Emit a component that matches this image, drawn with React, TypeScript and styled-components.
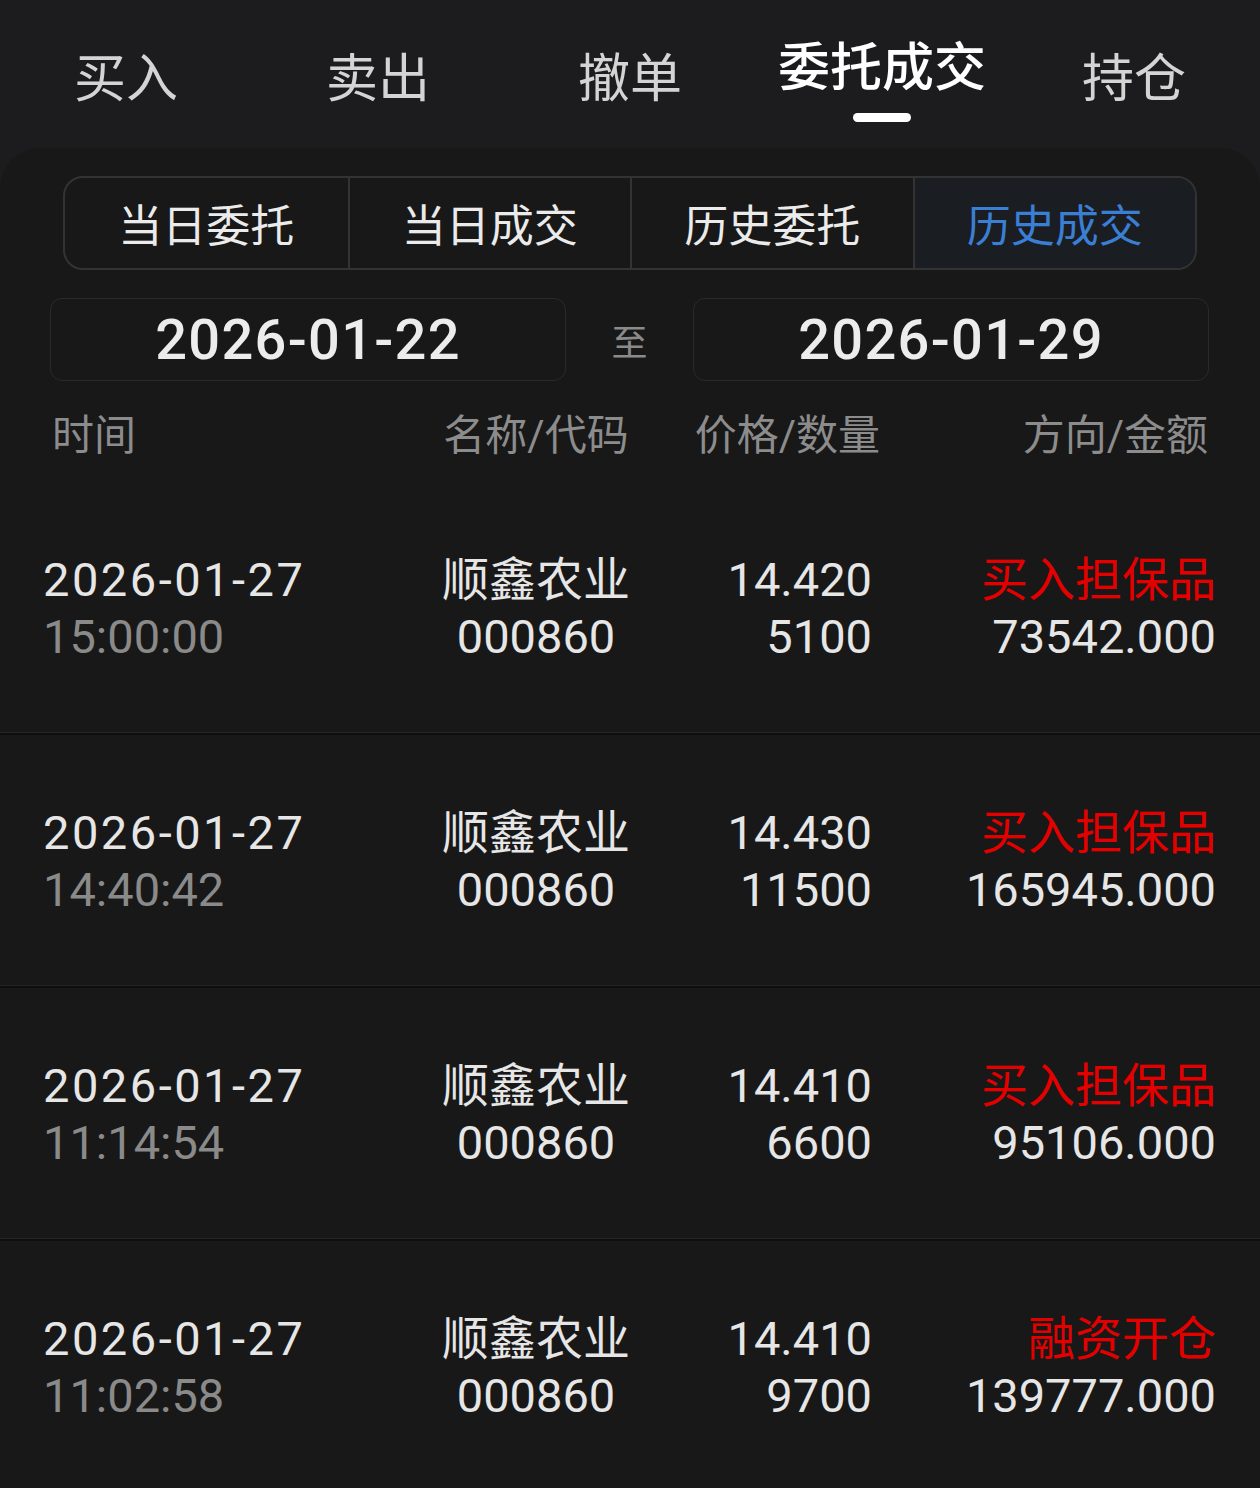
import styled, { createGlobalStyle } from 'styled-components';

const GlobalStyle = createGlobalStyle`
    body {
        margin: 0;
        background: #1c1c1e;
        font-family: Roboto, "Noto Sans CJK SC", sans-serif;
    }
`;

type ActiveProps = {
    $active?: boolean;
}

const Page = styled.div`
    width: 1260px;
    height: 1488px;
    overflow: hidden;
    background: #1c1c1e;
`;

const TabBar = styled.nav`
    display: grid;
    grid-template-columns: repeat(5, 1fr);
    height: 148px;
`;

const Tab = styled.div<ActiveProps>`
    display: flex;
    flex-direction: column;
    align-items: center;
    padding-top: ${({ $active }) => $active ? '43px' : '54px'};
    font-size: 52px;
    line-height: 52px;
    color: ${({ $active }) => $active ? '#ffffff' : '#d4d4d4'};
    font-weight: ${({ $active }) => $active ? 500 : 400};
`;

const TabLine = styled.span`
    display: block;
    width: 58px;
    height: 9px;
    margin-top: 18px;
    border-radius: 5px;
    background: #ffffff;
`;

const Panel = styled.section`
    background: #181818;
    border-radius: 40px 40px 0 0;
    padding-top: 28px;
    min-height: 1340px;
`;

const Segmented = styled.div`
    display: grid;
    grid-template-columns: repeat(4, 1fr);
    margin: 0 63px;
    height: 94px;
    box-sizing: border-box;
    border: 2px solid #333333;
    border-radius: 20px;
    overflow: hidden;
`;

const Segment = styled.div<ActiveProps>`
    display: flex;
    align-items: center;
    justify-content: center;
    font-size: 44px;
    color: ${({ $active }) => $active ? '#3a7fd4' : '#ebebeb'};
    background: ${({ $active }) => $active ? '#1a1d22' : 'transparent'};
    & + & {
        border-left: 2px solid #333333;
    }
`;

const DateRow = styled.div`
    display: grid;
    grid-template-columns: 516px 1fr 516px;
    align-items: center;
    margin: 28px 51px 0 50px;
    height: 83px;
`;

const DateBox = styled.div`
    height: 83px;
    box-sizing: border-box;
    border: 1px solid #2a2a2a;
    border-radius: 12px;
    display: flex;
    align-items: center;
    justify-content: center;
    font-size: 56px;
    font-weight: 500;
    letter-spacing: 1.3px;
    color: #ececec;
`;

const DateSep = styled.span`
    text-align: center;
    font-size: 36px;
    color: #8a8a8a;
`;

const HeadRow = styled.div`
    display: grid;
    grid-template-columns: 384px 200px 244px 1fr;
    align-items: center;
    height: 101px;
    padding: 0 52px;
    font-size: 42px;
    color: #8c8c8c;
`;

const Cell = styled.div<{ $align: 'left' | 'center' | 'right' }>`
    text-align: ${({ $align }) => $align};
`;

const Row = styled.div`
    display: grid;
    grid-template-columns: 396px 194px 239px 1fr;
    align-items: center;
    height: 253px;
    box-sizing: border-box;
    padding: 0 44px 0 43px;
    border-bottom: 2px solid #0e0e0e;
    box-shadow: inset 0 -1px 0 #262626;
    font-size: 47px;
    line-height: 57px;
    color: #e6e6e6;
`;

const Line = styled.div<{ $tone?: 'dim' | 'red' }>`
    color: ${({ $tone }) => $tone === 'dim' ? '#8a8a8a' : $tone === 'red' ? '#e50000' : '#e6e6e6'};
`;

const Stamp = styled(Line)`
    letter-spacing: 2.5px;
`;

const tabs = ['买入', '卖出', '撤单', '委托成交', '持仓'];
const segments = ['当日委托', '当日成交', '历史委托', '历史成交'];

const trades = [
    { date: '2026-01-27', time: '15:00:00', price: '14.420', qty: '5100', side: '买入担保品', amount: '73542.000' },
    { date: '2026-01-27', time: '14:40:42', price: '14.430', qty: '11500', side: '买入担保品', amount: '165945.000' },
    { date: '2026-01-27', time: '11:14:54', price: '14.410', qty: '6600', side: '买入担保品', amount: '95106.000' },
    { date: '2026-01-27', time: '11:02:58', price: '14.410', qty: '9700', side: '融资开仓', amount: '139777.000' },
];

const App = () => {
    return (
        <Page>
            <GlobalStyle />
            <TabBar>
                {tabs.map((t) => (
                    <Tab key={t} $active={t === '委托成交'}>
                        {t}
                        {t === '委托成交' && <TabLine />}
                    </Tab>
                ))}
            </TabBar>
            <Panel>
                <Segmented>
                    {segments.map((s) => (
                        <Segment key={s} $active={s === '历史成交'}>{s}</Segment>
                    ))}
                </Segmented>
                <DateRow>
                    <DateBox>2026-01-22</DateBox>
                    <DateSep>至</DateSep>
                    <DateBox>2026-01-29</DateBox>
                </DateRow>
                <HeadRow>
                    <Cell $align='left'>时间</Cell>
                    <Cell $align='center'>名称/代码</Cell>
                    <Cell $align='right'>价格/数量</Cell>
                    <Cell $align='right'>方向/金额</Cell>
                </HeadRow>
                {trades.map((tr) => (
                    <Row key={tr.time}>
                        <Cell $align='left'>
                            <Stamp>{tr.date}</Stamp>
                            <Line $tone='dim'>{tr.time}</Line>
                        </Cell>
                        <Cell $align='center'>
                            <Line>顺鑫农业</Line>
                            <Line>000860</Line>
                        </Cell>
                        <Cell $align='right'>
                            <Line>{tr.price}</Line>
                            <Line>{tr.qty}</Line>
                        </Cell>
                        <Cell $align='right'>
                            <Line $tone='red'>{tr.side}</Line>
                            <Line>{tr.amount}</Line>
                        </Cell>
                    </Row>
                ))}
            </Panel>
        </Page>
    );
}

export default App;
